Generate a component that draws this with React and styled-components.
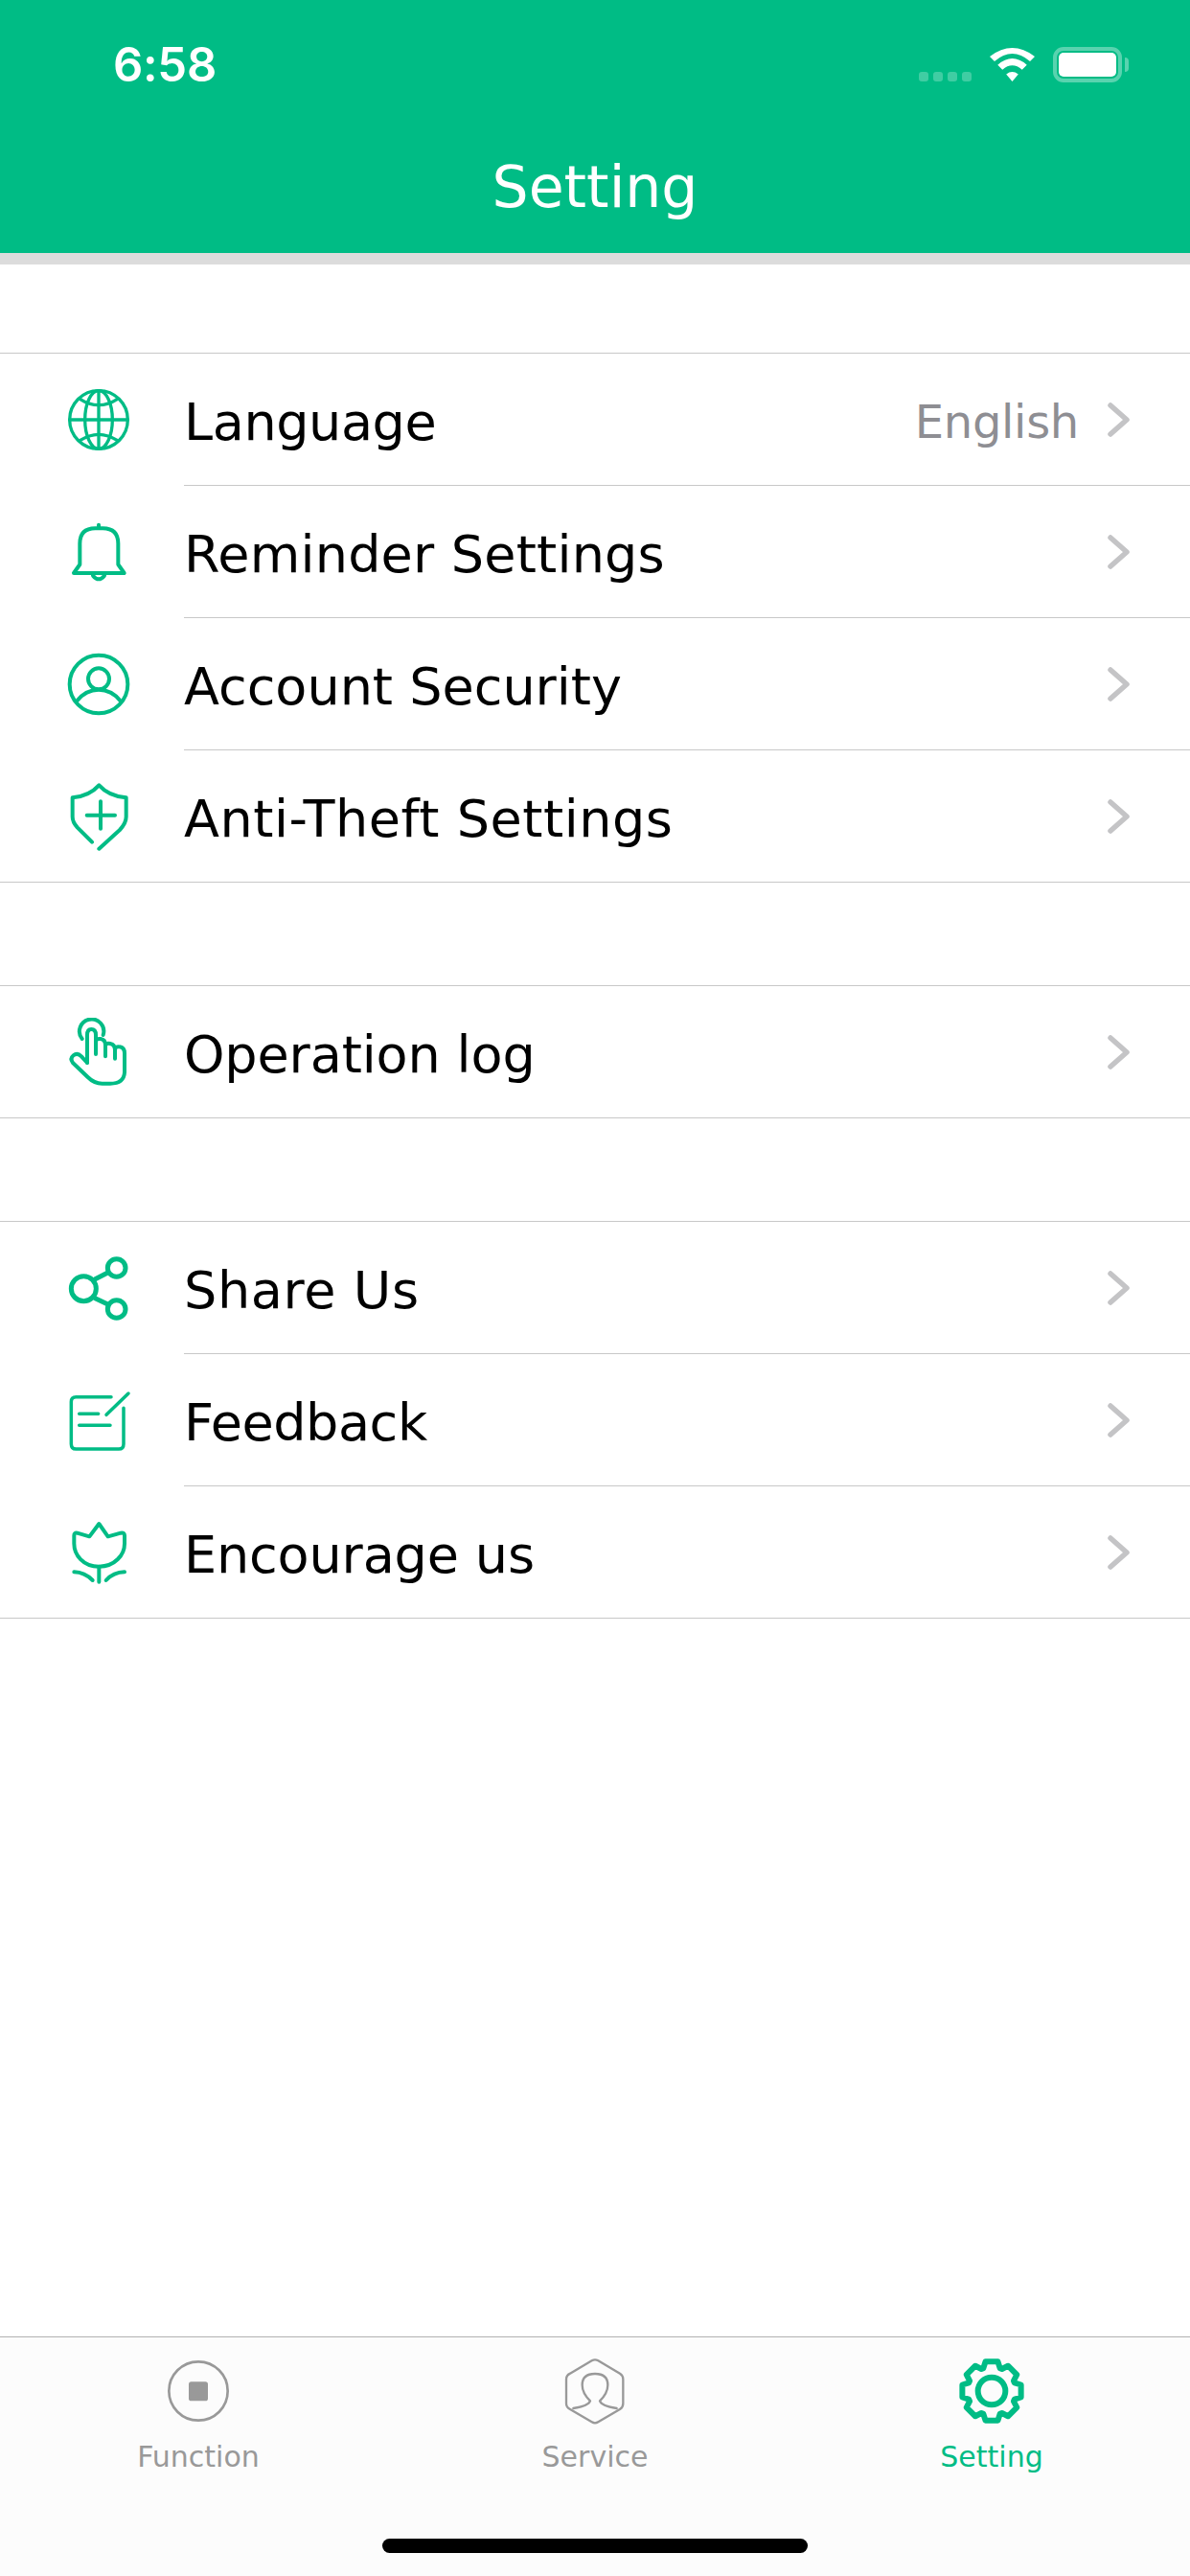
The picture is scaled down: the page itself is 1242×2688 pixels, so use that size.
import React from 'react';
import styled, { createGlobalStyle } from 'styled-components';

const GREEN = '#00bc85';

const GlobalStyle = createGlobalStyle`
  html, body {
    margin: 0;
    padding: 0;
    background: #fff;
  }
  body {
    font-family: "DejaVu Sans", sans-serif;
  }
`;

const Page = styled.div`
  display: flex;
  flex-direction: column;
  min-height: 100vh;
`;

const Header = styled.header`
  background: ${GREEN};
  border-bottom: 12px solid #dcdcdc;
  color: #fff;
`;

const StatusBar = styled.div`
  display: flex;
  align-items: center;
  justify-content: space-between;
  height: 134px;
  padding: 0 71px 0 118px;
`;

const Clock = styled.span`
  font-family: Inter, "Liberation Sans", sans-serif;
  font-size: 49px;
  font-weight: 600;
  line-height: 1;
  letter-spacing: -0.3px;
`;

const StatusIcons = styled.div`
  display: flex;
  align-items: center;
  gap: 19px;
`;

const SignalDots = styled.div`
  display: flex;
  gap: 5px;
  margin-top: 25px;
`;

const Dot = styled.span`
  width: 10px;
  height: 10px;
  border-radius: 3px;
  background: rgba(255, 255, 255, 0.25);
`;

const Battery = styled.div`
  position: relative;
  box-sizing: border-box;
  width: 72px;
  height: 37px;
  padding: 2px;
  border: 4px solid rgba(255, 255, 255, 0.35);
  border-radius: 11px;

  &::after {
    content: '';
    position: absolute;
    right: -11px;
    top: 7px;
    width: 4px;
    height: 15px;
    border-radius: 0 8px 8px 0;
    background: rgba(255, 255, 255, 0.35);
  }
`;

const BatteryLevel = styled.div`
  height: 100%;
  border-radius: 5px;
  background: #fff;
`;

const Title = styled.h1`
  margin: 0;
  height: 122px;
  padding-bottom: 8px;
  display: flex;
  align-items: center;
  justify-content: center;
  font-size: 60px;
  font-weight: 400;
`;

const Main = styled.main`
  flex: 1;
  padding-top: 92px;
`;

const Group = styled.section`
  border-top: 1px solid #c8c8c8;
  border-bottom: 1px solid #c8c8c8;
  margin-bottom: 107px;
`;

const Row = styled.div`
  display: flex;
  height: 137px;

  & + & {
    margin-top: 1px;
  }
`;

const IconSlot = styled.div`
  width: 192px;
  flex-shrink: 0;
  box-sizing: border-box;
  padding-left: 67px;
  display: flex;
  align-items: center;
`;

const RowBody = styled.div`
  flex: 1;
  display: flex;
  align-items: center;
  padding-right: 62px;
  position: relative;

  ${Row}:not(:last-child) > &::after {
    content: '';
    position: absolute;
    left: 0;
    right: 0;
    bottom: -1px;
    height: 1px;
    background: #c8c8c8;
  }
`;

const Label = styled.span`
  flex: 1;
  padding-top: 6px;
  font-size: 54px;
  letter-spacing: ${(props) => props.$tracking || 0}px;
  color: #000;
`;

const Value = styled.span`
  padding-top: 4px;
  margin-right: 30px;
  font-size: 48px;
  letter-spacing: -0.3px;
  color: #8e8e93;
`;

const ChevronMark = styled.svg`
  margin-top: 1px;
  fill: none;
  stroke: #c4c4c6;
  stroke-width: 5.5;
  stroke-linecap: round;
  stroke-linejoin: round;
`;

const Glyph = styled.svg`
  display: block;
  width: 72px;
  height: 72px;
  fill: none;
  stroke: ${(props) => props.$color || GREEN};
  stroke-width: ${(props) => props.$weight || 12};
  stroke-linecap: round;
  stroke-linejoin: round;
`;

const TabBar = styled.nav`
  display: grid;
  grid-template-columns: repeat(3, 1fr);
  height: 249px;
  border-top: 1px solid #b2b2b2;
  background: #fcfcfc;
  position: relative;
`;

const Tab = styled.div`
  display: flex;
  flex-direction: column;
  align-items: center;
  padding-top: 20px;
  color: ${(props) => (props.$active ? GREEN : '#999')};
`;

const TabLabel = styled.span`
  margin-top: 15px;
  font-size: 30px;
  line-height: 36px;
`;

const HomeIndicator = styled.div`
  position: absolute;
  left: 399px;
  bottom: 24px;
  width: 444px;
  height: 15px;
  border-radius: 8px;
  background: #000;
`;

const Chevron = () => (
  <ChevronMark width="24" height="36" viewBox="0 0 24 36">
    <path d="M3 3 L20 18 L3 33" />
  </ChevronMark>
);

const WifiIcon = () => (
  <svg width="47" height="35" viewBox="305 60 142 105" fill="#fff">
    <path d="M305 87 Q376 33 447 87 L432 102 Q376 54 320 102 Z" />
    <path d="M330 113 Q376 73 422 113 L407 128 Q376 102 345 128 Z" />
    <path d="M357 143 Q376 128 395 143 L376 165 Z" />
  </svg>
);

const GlobeIcon = () => (
  <Glyph viewBox="81 65 216 216" $weight={10}>
    <circle cx="189" cy="173" r="91" />
    <ellipse cx="189" cy="173" rx="43" ry="91" />
    <path d="M98 173 H280 M189 82 V264" />
    <path d="M130 108 Q189 146 248 108 M130 238 Q189 200 248 238" />
  </Glyph>
);

const BellIcon = () => (
  <Glyph viewBox="81 478 216 216">
    <path d="M130 625 V560 Q130 512 178 512 H202 Q250 512 250 560 V625 L269 652 H111 Z" />
    <path d="M189 501 V510 M171 660 Q189 682 207 660" />
  </Glyph>
);

const AccountIcon = () => (
  <Glyph viewBox="81 -7 216 216">
    <circle cx="189" cy="101" r="91" />
    <circle cx="189" cy="84" r="33" />
    <path d="M122 152 C140 129 165 118 189 118 C213 118 238 129 256 152" />
  </Glyph>
);

const ShieldIcon = () => (
  <Glyph viewBox="81 406 216 216">
    <path d="M168 594 L122 548 Q107 532 107 515 V455 Q160 450 190 416 Q220 450 275 455 V515 Q275 535 255 556 L190 615" />
    <path d="M152 510 H240 M195 467 V552" />
  </Glyph>
);

const HandIcon = () => (
  <Glyph viewBox="81 64 216 216">
    <path d="M137 130 A38 38 0 1 1 203 118" />
    <path d="M153 205 V118 Q153 100 166 100 Q180 100 180 118 V178" />
    <path d="M180 140 Q180 128 195 130 Q210 132 210 150 V185" />
    <path d="M210 150 Q212 143 225 145 Q240 148 240 165 V192" />
    <path d="M240 165 Q242 152 255 155 Q270 158 270 175 V235 Q268 270 225 270 H200 Q175 270 155 250 L108 205 Q98 192 110 182 Q122 172 135 185 L153 205" />
  </Glyph>
);

const ShareIcon = () => (
  <Glyph viewBox="81 82 216 216" $weight={15}>
    <circle cx="142" cy="192" r="39" />
    <circle cx="245" cy="127" r="28" />
    <circle cx="245" cy="256" r="28" />
    <path d="M178 162 L216 143 M178 222 L216 240" />
  </Glyph>
);

const NoteIcon = () => (
  <Glyph viewBox="81 496 216 216" $weight={10.5}>
    <path d="M228 531 H118 Q103 531 103 546 V678 Q103 694 118 694 H252 Q267 694 267 678 V566" />
    <path d="M128 584 H188 M128 620 H225 M213 587 L282 520" />
  </Glyph>
);

const TulipIcon = () => (
  <Glyph viewBox="81 910 216 216">
    <path d="M190 1062 C140 1062 112 1025 112 990 V965 Q112 955 122 957 L160 968 L190 928 L218 968 L258 957 Q270 955 270 965 V990 C270 1025 240 1062 190 1062 Z" />
    <path d="M190 1062 V1110 M112 1079 Q145 1080 170 1105 M270 1079 Q235 1080 212 1105" />
  </Glyph>
);

const FunctionIcon = () => (
  <Glyph viewBox="120 56 216 216" $color="#999" $weight={8}>
    <circle cx="228" cy="164" r="92" />
    <rect x="198" y="135" width="60" height="60" rx="8" fill="#999" stroke="none" />
  </Glyph>
);

const ServiceIcon = () => (
  <Glyph viewBox="72 56 216 216" $color="#999" $weight={7}>
    <path d="M170 69 Q180 63 190 69 L258 109 Q268 115 268 127 V203 Q268 215 258 221 L190 261 Q180 267 170 261 L102 221 Q90 215 90 203 V127 Q90 115 102 109 Z" />
    <path d="M112 218 Q160 210 165 195 Q140 170 140 145 Q140 110 180 110 Q220 110 220 145 Q220 170 195 195 Q200 210 248 218" />
  </Glyph>
);

// eight flat teeth around the hub, one pointing straight up
const gearOutline = () => {
  const point = (radius, degrees) => {
    const rad = ((degrees - 90) * Math.PI) / 180;
    return `${(108 + radius * Math.cos(rad)).toFixed(1)} ${(108 + radius * Math.sin(rad)).toFixed(1)}`;
  };
  let d = '';
  for (let i = 0; i < 8; i++) {
    const a = i * 45;
    d += `${i === 0 ? 'M' : 'L'}${point(76, a - 20)} L${point(94, a - 12)} L${point(94, a + 12)} L${point(76, a + 20)} `;
  }
  return d + 'Z';
};

const GearIcon = () => (
  <Glyph viewBox="0 0 216 216" $weight={18}>
    <path d={gearOutline()} />
    <circle cx="108" cy="108" r="43" />
  </Glyph>
);

const groups = [
  [
    { icon: GlobeIcon, label: 'Language', value: 'English', tracking: -0.4 },
    { icon: BellIcon, label: 'Reminder Settings', tracking: 0.2 },
    { icon: AccountIcon, label: 'Account Security' },
    { icon: ShieldIcon, label: 'Anti-Theft Settings', tracking: 0.54 },
  ],
  [{ icon: HandIcon, label: 'Operation log', tracking: -0.13 }],
  [
    { icon: ShareIcon, label: 'Share Us', tracking: 0.64 },
    { icon: NoteIcon, label: 'Feedback', tracking: -0.43 },
    { icon: TulipIcon, label: 'Encourage us', tracking: -0.14 },
  ],
];

const tabs = [
  { icon: FunctionIcon, label: 'Function' },
  { icon: ServiceIcon, label: 'Service' },
  { icon: GearIcon, label: 'Setting', active: true },
];

const App = () => (
  <Page>
    <GlobalStyle />
    <Header>
      <StatusBar>
        <Clock>6:58</Clock>
        <StatusIcons>
          <SignalDots>
            {[0, 1, 2, 3].map((n) => (
              <Dot key={n} />
            ))}
          </SignalDots>
          <WifiIcon />
          <Battery>
            <BatteryLevel />
          </Battery>
        </StatusIcons>
      </StatusBar>
      <Title>Setting</Title>
    </Header>
    <Main>
      {groups.map((rows, g) => (
        <Group key={g}>
          {rows.map(({ icon: Icon, label, value, tracking }) => (
            <Row key={label}>
              <IconSlot>
                <Icon />
              </IconSlot>
              <RowBody>
                <Label $tracking={tracking}>{label}</Label>
                {value && <Value>{value}</Value>}
                <Chevron />
              </RowBody>
            </Row>
          ))}
        </Group>
      ))}
    </Main>
    <TabBar>
      {tabs.map(({ icon: Icon, label, active }) => (
        <Tab key={label} $active={active}>
          <Icon />
          <TabLabel>{label}</TabLabel>
        </Tab>
      ))}
      <HomeIndicator />
    </TabBar>
  </Page>
);

export default App;
